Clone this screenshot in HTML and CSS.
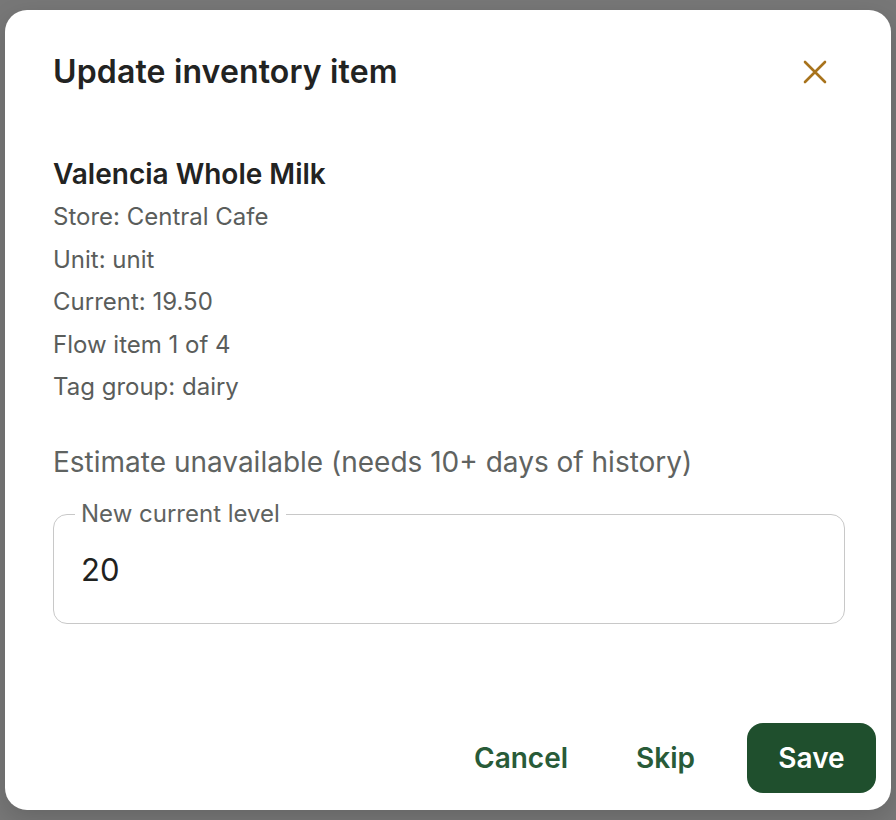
FILE: index.html
```html
<!DOCTYPE html>
<html lang="en">
<head>
<meta charset="utf-8">
<title>Update inventory item</title>
<link rel="stylesheet" href="styles.css">
</head>
<body>
<div class="dialog" role="dialog" aria-labelledby="dlg-title">
  <div class="header">
    <h2 class="title" id="dlg-title">Update inventory item</h2>
    <button class="close" aria-label="Close">
      <svg width="24" height="24" viewBox="0 0 24 24" aria-hidden="true">
        <path d="M2 2 L22 22 M22 2 L2 22" stroke="currentColor" stroke-width="2.6" stroke-linecap="round" fill="none"/>
      </svg>
    </button>
  </div>
  <div class="content">
    <h3 class="item-name">Valencia Whole Milk</h3>
    <div class="details">
      <p>Store: Central Cafe</p>
      <p>Unit: unit</p>
      <p>Current: 19.50</p>
      <p>Flow item 1 of 4</p>
      <p>Tag group: dairy</p>
    </div>
    <p class="estimate">Estimate unavailable (needs 10+ days of history)</p>
    <fieldset class="field">
      <legend>New current level</legend>
      <input class="field-input" type="text" value="20">
    </fieldset>
  </div>
  <div class="actions">
    <button class="btn btn-text">Cancel</button>
    <button class="btn btn-text">Skip</button>
    <button class="btn btn-primary">Save</button>
  </div>
</div>
</body>
</html>
```

FILE: styles.css
```css
html, body {
  margin: 0;
  padding: 0;
}
body {
  background: #777777;
  font-family: Inter, "Noto Sans", "Liberation Sans", sans-serif;
  width: 896px;
  height: 820px;
  padding: 10px 5px;
  box-sizing: border-box;
}
.dialog {
  height: 800px;
  background: #ffffff;
  border-radius: 22px;
  display: flex;
  flex-direction: column;
  box-sizing: border-box;
  box-shadow: 0 8px 24px rgba(0,0,0,0.15);
}
.header {
  display: flex;
  align-items: center;
  justify-content: space-between;
  padding: 41.5px 56px 0 48px;
}
.title {
  margin: 0;
  font-size: 32px;
  line-height: 40px;
  font-weight: 600;
  letter-spacing: 0.15px;
  color: #222322;
}
.close {
  width: 40px;
  height: 40px;
  border: 0;
  background: none;
  padding: 0;
  display: flex;
  align-items: center;
  justify-content: center;
  color: #a8731c;
  cursor: pointer;
}
.content {
  padding: 0 46px 0 48px;
  display: flex;
  flex-direction: column;
}
.item-name {
  margin: 64px 0 0;
  font-size: 28px;
  line-height: 36px;
  font-weight: 600;
  color: #222322;
}
.details {
  margin-top: 4.8px;
}
.details p {
  margin: 0;
  font-size: 24px;
  line-height: 42.4px;
  color: #5a5d5b;
}
.estimate {
  margin: 33.2px 0 0;
  font-size: 28px;
  line-height: 40px;
  color: #5f6361;
}
.field {
  margin: 18.5px 0 0;
  border: 1.5px solid #c8c8c8;
  border-radius: 14px;
  padding: 0 20px 23.5px 21px;
}
.field legend {
  padding: 0 6px;
  font-size: 24px;
  line-height: 28px;
  color: #5f6361;
}
.field-input {
  display: block;
  width: 100%;
  box-sizing: border-box;
  margin-top: 11px;
  height: 60px;
  border: 0;
  outline: none;
  padding: 0 6px;
  font-family: inherit;
  font-size: 31px;
  color: #1f2220;
  background: transparent;
}
.actions {
  margin-top: auto;
  display: flex;
  justify-content: flex-end;
  align-items: center;
  gap: 28px;
  padding: 0 15px 17px 0;
}
.btn {
  height: 70px;
  border: 0;
  font-family: inherit;
  font-size: 28px;
  font-weight: 600;
  padding: 0 20px;
  border-radius: 16px;
  cursor: pointer;
}
.btn-text {
  background: transparent;
  color: #285b38;
}
.btn-primary {
  margin-left: 4px;
  width: 129px;
  padding: 0;
  background: #1f4f2d;
  color: #ffffff;
}
```
